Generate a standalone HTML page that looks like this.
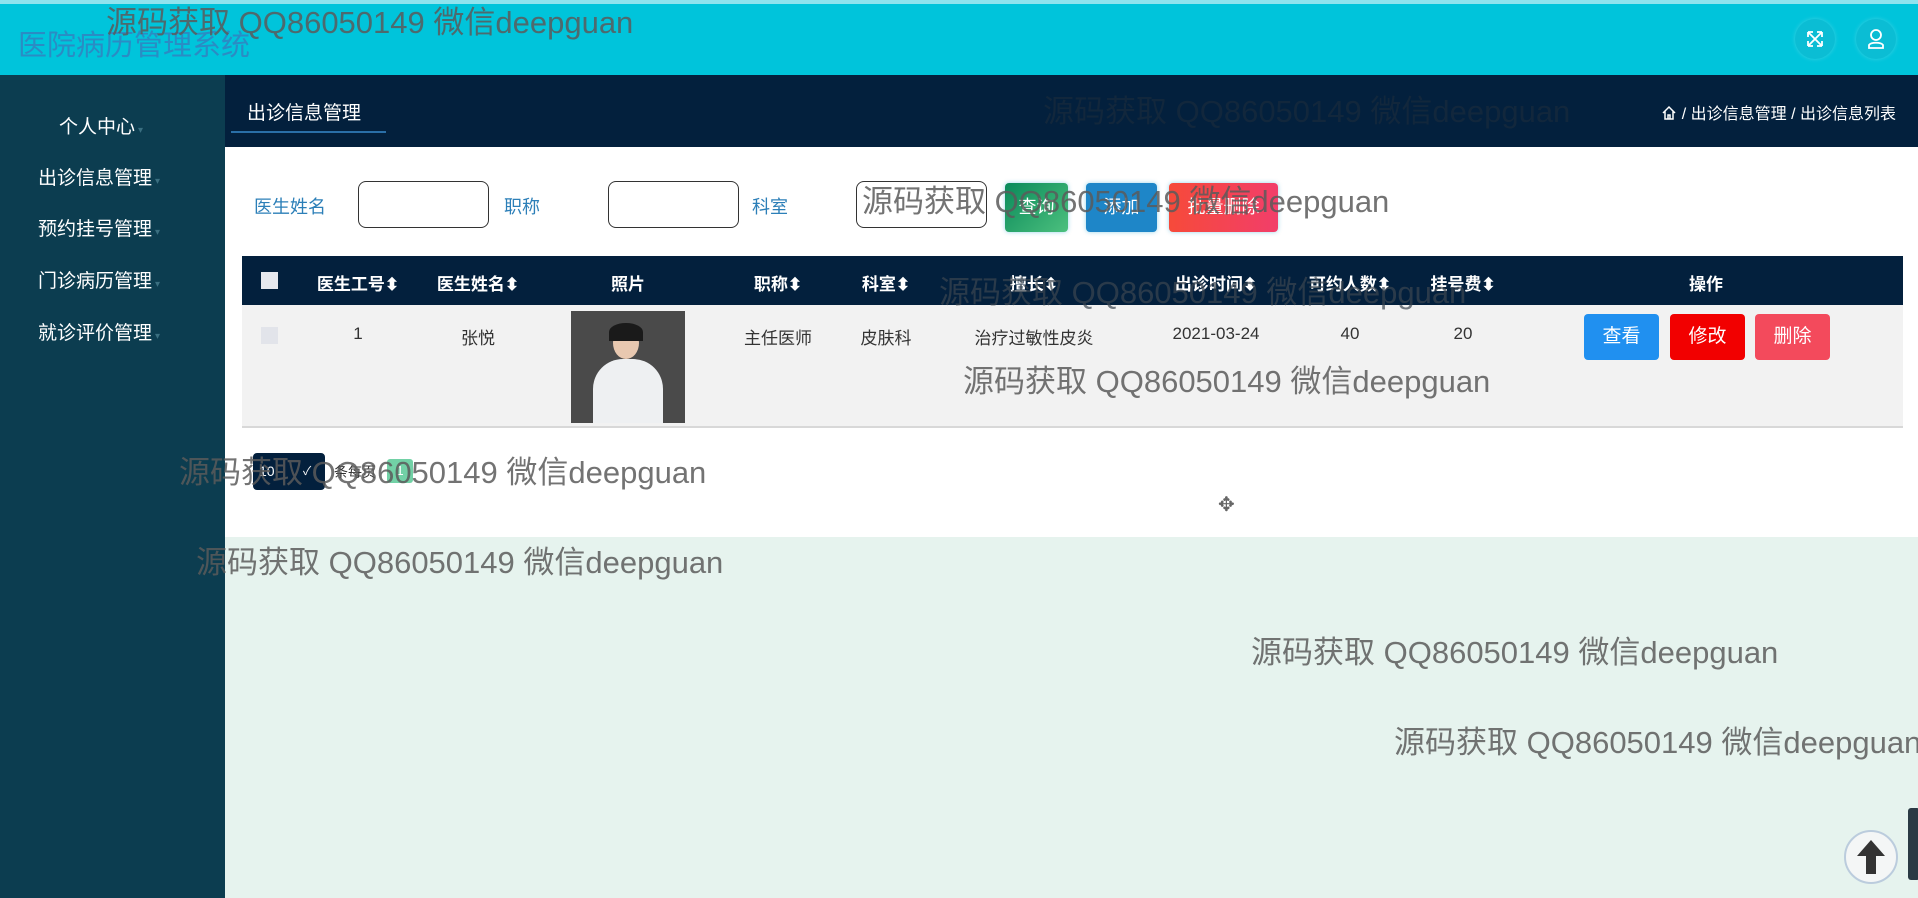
<!DOCTYPE html>
<html><head><meta charset="utf-8"><style>
*{margin:0;padding:0;box-sizing:border-box}
body{width:1918px;height:898px;overflow:hidden;position:relative;background:#e6f3ee;font-family:"Liberation Sans","Noto Sans CJK SC",sans-serif}
.abs{position:absolute}
.hdr{left:0;top:0;width:1918px;height:75px;background:#00c4db;border-top:4px solid #8fe3ee}
.title{left:18px;top:22px;font-size:29px;color:#2a8cc4;white-space:nowrap}
.circ{width:40px;height:40px;border-radius:50%;background:#0bbdd4;box-shadow:0 0 4px #3bd0e2}
.side{left:0;top:75px;width:225px;height:823px;background:#0c3d50}
.mi{color:#fff;font-size:19px;white-space:nowrap}
.mi span{color:#3a6f80;font-size:10px;margin-left:3px}
.bar{left:225px;top:75px;width:1693px;height:72px;background:#03203d}
.white{left:225px;top:147px;width:1693px;height:390px;background:#fff}
.lbl{font-size:18px;color:#2c7fb8}
.inp{width:131px;height:47px;border:1.5px solid #333;border-radius:8px;background:#fff}
.btn{height:49px;border-radius:4px;color:#fff;font-size:18px;text-align:center;line-height:49px;box-shadow:0 0 5px rgba(0,150,200,.4)}
.th{left:242px;top:256px;width:1661px;height:49px;background:#03203d}
.row{left:242px;top:305px;width:1661px;height:123px;background:#f2f2f2;border-bottom:2px solid #d8d8d8}
.c{position:absolute;transform:translateX(-50%);white-space:nowrap}
.h{color:#fff;font-weight:bold;font-size:17px;top:14px}
.d{color:#333;font-size:17px;top:19px}
.ab{width:75px;height:46px;border-radius:4px;color:#fff;font-size:19px;text-align:center;line-height:46px}
.wm{font-size:31px;color:rgba(90,90,90,.85);white-space:nowrap;font-family:"Liberation Sans","Noto Sans CJK SC",sans-serif}
</style></head><body>
<div class="abs hdr"></div>
<div class="abs title">医院病历管理系统</div>
<div class="abs circ" style="left:1795px;top:19px"></div>
<div class="abs circ" style="left:1856px;top:19px"></div>
<svg class="abs" style="left:1805px;top:29px" width="20" height="20" viewBox="0 0 20 20" fill="none" stroke="#fff" stroke-width="1.8"><path d="M3 3l14 14M17 3L3 17M3 3h5M3 3v5M17 3h-5M17 3v5M3 17h5M3 17v-5M17 17h-5M17 17v-5"/></svg>
<svg class="abs" style="left:1866px;top:28px" width="20" height="22" viewBox="0 0 20 22" fill="none" stroke="#fff" stroke-width="1.8"><circle cx="10" cy="7" r="5"/><path d="M3 20v-3c2-3 12-3 14 0v3z"/></svg>

<div class="abs side"></div>
<div class="abs mi" style="left:59px;top:112px">个人中心<span>▾</span></div>
<div class="abs mi" style="left:38px;top:163px">出诊信息管理<span>▾</span></div>
<div class="abs mi" style="left:38px;top:214px">预约挂号管理<span>▾</span></div>
<div class="abs mi" style="left:38px;top:266px">门诊病历管理<span>▾</span></div>
<div class="abs mi" style="left:38px;top:318px">就诊评价管理<span>▾</span></div>

<div class="abs bar"></div>
<div class="abs" style="left:247px;top:98px;color:#fff;font-size:19px">出诊信息管理</div>
<div class="abs" style="left:231px;top:131px;width:155px;height:2px;background:#2a6fa8"></div>
<div class="abs" style="right:22px;top:100px;color:#fff;font-size:16px;white-space:nowrap"><svg width="16" height="16" viewBox="0 0 16 16" fill="none" stroke="#fff" stroke-width="1.5" style="vertical-align:-2px"><path d="M2 8L8 2l6 6M4 6v8h8V6M7 14v-4h2v4"/></svg> / 出诊信息管理 / 出诊信息列表</div>

<div class="abs white"></div>
<div class="abs lbl" style="left:254px;top:193px">医生姓名</div>
<div class="abs inp" style="left:358px;top:181px"></div>
<div class="abs lbl" style="left:504px;top:193px">职称</div>
<div class="abs inp" style="left:608px;top:181px"></div>
<div class="abs lbl" style="left:752px;top:193px">科室</div>
<div class="abs inp" style="left:856px;top:181px"></div>
<div class="abs btn" style="left:1005px;top:183px;width:63px;background:linear-gradient(135deg,#0a8a5a,#4cc07e)">查询</div>
<div class="abs btn" style="left:1086px;top:183px;width:71px;background:#1e86c8">添加</div>
<div class="abs btn" style="left:1169px;top:183px;width:109px;background:linear-gradient(90deg,#f64a3a,#f23e6a)">批量删除</div>

<div class="abs th">
<div class="abs" style="left:19px;top:16px;width:17px;height:17px;background:#e6e8ee"></div>
<div class="c h" style="left:116px">医生工号⬍</div>
<div class="c h" style="left:236px">医生姓名⬍</div>
<div class="c h" style="left:386px">照片</div>
<div class="c h" style="left:536px">职称⬍</div>
<div class="c h" style="left:644px">科室⬍</div>
<div class="c h" style="left:792px">擅长⬍</div>
<div class="c h" style="left:974px">出诊时间⬍</div>
<div class="c h" style="left:1108px">可约人数⬍</div>
<div class="c h" style="left:1221px">挂号费⬍</div>
<div class="c h" style="left:1464px">操作</div>
</div>
<div class="abs row">
<div class="abs" style="left:19px;top:22px;width:17px;height:17px;background:#e2e4ea"></div>
<div class="c d" style="left:116px">1</div>
<div class="c d" style="left:236px">张悦</div>
<div class="abs" style="left:329px;top:6px;width:114px;height:112px;background:#4a4a4a;overflow:hidden">
<div class="abs" style="left:42px;top:16px;width:26px;height:32px;border-radius:50%;background:#e8c8b0"></div>
<div class="abs" style="left:38px;top:12px;width:34px;height:18px;border-radius:50% 50% 0 0;background:#1a1a1a"></div>
<div class="abs" style="left:22px;top:48px;width:70px;height:70px;border-radius:30px 30px 0 0;background:#eef0f2"></div>
</div>
<div class="c d" style="left:536px">主任医师</div>
<div class="c d" style="left:644px">皮肤科</div>
<div class="c d" style="left:792px">治疗过敏性皮炎</div>
<div class="c d" style="left:974px">2021-03-24</div>
<div class="c d" style="left:1108px">40</div>
<div class="c d" style="left:1221px">20</div>
<div class="abs ab" style="left:1342px;top:9px;background:#2090f0">查看</div>
<div class="abs ab" style="left:1428px;top:9px;background:#f20000">修改</div>
<div class="abs ab" style="left:1513px;top:9px;background:#f34a5c">删除</div>
</div>

<div class="abs" style="left:253px;top:453px;width:72px;height:37px;background:#03203d;border-radius:4px;color:#fff;font-size:14px;line-height:37px;padding-left:6px">10<span style="position:absolute;left:50px;font-size:12px">✓</span></div>
<div class="abs" style="left:334px;top:462px;font-size:14px;color:#333">条每页</div>
<div class="abs" style="left:387px;top:459px;width:26px;height:24px;background:#72d1a6;border-radius:3px;color:#fff;font-size:13px;text-align:center;line-height:24px">1</div>
<div class="abs" style="left:1218px;top:492px;font-size:20px;color:#666">✥</div>

<div class="abs" style="left:1844px;top:830px;width:54px;height:54px;border-radius:50%;background:#f4f6f6;border:2px solid #bcd"></div>
<svg class="abs" style="left:1853px;top:838px" width="36" height="38" viewBox="0 0 36 38"><path d="M18 2L4 18h9v18h10V18h9z" fill="#333"/></svg>
<div class="abs" style="left:1908px;top:808px;width:12px;height:72px;background:#2a3a44;border-radius:3px"></div>

<div class="abs wm" style="left:106px;top:-3px">源码获取 QQ86050149 微信deepguan</div>
<div class="abs wm" style="left:1043px;top:86px;color:rgba(20,40,60,.9)">源码获取 QQ86050149 微信deepguan</div>
<div class="abs wm" style="left:862px;top:176px">源码获取 QQ86050149 微信deepguan</div>
<div class="abs wm" style="left:939px;top:267px;color:rgba(60,70,80,.7)">源码获取 QQ86050149 微信deepguan</div>
<div class="abs wm" style="left:963px;top:356px">源码获取 QQ86050149 微信deepguan</div>
<div class="abs wm" style="left:179px;top:447px">源码获取 QQ86050149 微信deepguan</div>
<div class="abs wm" style="left:196px;top:537px">源码获取 QQ86050149 微信deepguan</div>
<div class="abs wm" style="left:1251px;top:627px">源码获取 QQ86050149 微信deepguan</div>
<div class="abs wm" style="left:1394px;top:717px">源码获取 QQ86050149 微信deepguan</div>
</body></html>
